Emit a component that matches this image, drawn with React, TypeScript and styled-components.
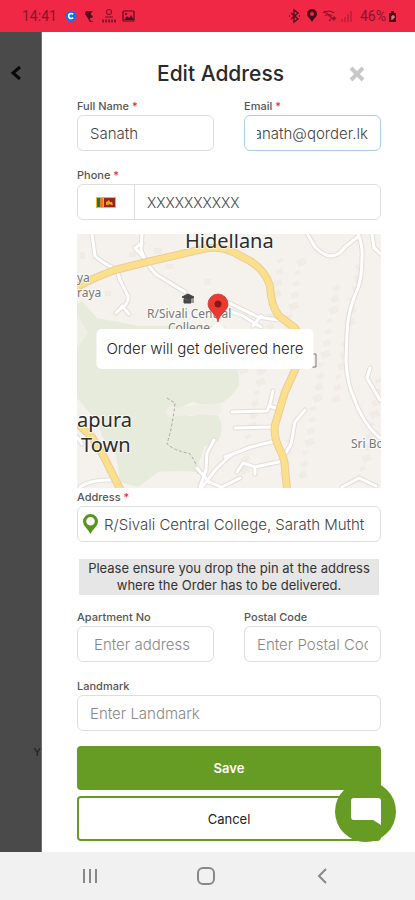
import React, { useLayoutEffect, useRef } from "react";
import styled, { createGlobalStyle, css } from "styled-components";

const GREEN = "#669c24";

const GlobalStyle = createGlobalStyle`
  *, *::before, *::after { box-sizing: border-box; }
  body { margin: 0; background: #fff; font-family: Inter, "Liberation Sans", sans-serif; color: #333; }
  button, input { font-family: inherit; }
`;

const Page = styled.div`
  display: flex;
  flex-direction: column;
  min-height: 100vh;
`;

const StatusBar = styled.header`
  display: flex;
  align-items: center;
  justify-content: space-between;
  height: 32px;
  padding: 0 18px 0 22px;
  background: #f02846;
  color: #86152a;
  font: 400 14px/20px Roboto, sans-serif;
`;

const StatusGroup = styled.div<{ $gap: number }>`
  display: flex;
  align-items: center;
  gap: ${(p) => p.$gap}px;
  svg { display: block; }
`;

const Body = styled.div`
  display: flex;
  flex: 1;
`;

const Backdrop = styled.aside`
  display: flex;
  flex-direction: column;
  justify-content: space-between;
  width: 42px;
  flex: none;
  padding: 30px 0 91px 6px;
  background: #4a4a4a;
  border-right: 1px solid #6e6e6e;
  overflow: hidden;
`;

const IconButton = styled.button`
  display: flex;
  align-items: center;
  justify-content: center;
  width: 20px;
  height: 22px;
  padding: 0;
  border: 0;
  background: none;
`;

const HiddenText = styled.span`
  align-self: flex-end;
  font-size: 11px;
  line-height: 18px;
  color: #1c1c1c;
`;

const Drawer = styled.main`
  position: relative;
  flex: 1;
  min-width: 0;
  padding: 27px 34px 11px 35px;
  background: #fff;
`;

const TitleRow = styled.div`
  display: grid;
  grid-template-columns: 24px 1fr 34px;
  align-items: center;
  justify-items: center;
  padding: 0 7px 0 0;
  margin-bottom: 10px;
`;

const Title = styled.h1`
  grid-column: 2;
  margin: 0;
  font-size: 21px;
  font-weight: 500;
  line-height: 30px;
  color: #2a2a2a;
  white-space: nowrap;
`;

const Form = styled.form`
  display: flex;
  flex-direction: column;
`;

const Row = styled.div`
  display: grid;
  grid-template-columns: 1fr 1fr;
  gap: 30px;
  margin-bottom: 17px;
`;

const Field = styled.div<{ $after?: number }>`
  display: flex;
  flex-direction: column;
  gap: 2px;
  min-width: 0;
  margin-bottom: ${(p) => p.$after ?? 0}px;
`;

const Label = styled.label`
  font-size: 11px;
  font-weight: 500;
  line-height: 14px;
  color: #555;
`;

const Required = styled.span`
  color: #ee1c2e;
`;

const box = css`
  height: 36px;
  border: 1px solid #dcdfe0;
  border-radius: 6px;
  background: #fff;
`;

const textStyle = css`
  font-weight: 300;
  color: #444;
  outline: none;
  &::placeholder { color: #888; opacity: 1; }
`;

const Input = styled.input<{ $active?: boolean; $indent?: number }>`
  ${box}
  ${textStyle}
  width: 100%;
  padding: 0 12px 0 ${(p) => p.$indent ?? 12}px;
  border-color: ${(p) => (p.$active ? "#a9cfe8" : "#dcdfe0")};
  font-size: 15px;
`;

const Group = styled.div`
  ${box}
  display: flex;
  align-items: stretch;
  overflow: hidden;
`;

const GroupInput = styled.input<{ $indent: number; $size: number }>`
  ${textStyle}
  flex: 1;
  min-width: 0;
  margin-right: 12px;
  padding: 0 0 0 ${(p) => p.$indent}px;
  border: 0;
  background: none;
  font-size: ${(p) => p.$size}px;
`;

const FlagButton = styled.button`
  display: flex;
  align-items: center;
  justify-content: center;
  width: 57px;
  padding: 0;
  border: 0;
  border-right: 1px solid #dcdfe0;
  background: none;
`;

const PinSlot = styled.span`
  display: flex;
  align-items: center;
  padding-left: 5px;
`;

const MapBox = styled.div`
  position: relative;
  height: 254px;
  margin: -3px 0 2px;
  overflow: hidden;
  background: #f4f1eb;
`;

const MapDrawing = styled.svg`
  display: block;
  width: 100%;
  height: 100%;
`;

const Popup = styled.div`
  position: absolute;
  top: 95px;
  left: 50%;
  transform: translateX(-50%);
  margin-left: -24px;
  width: 217px;
  border-radius: 5px;
  background: #fff;
  font-size: 15px;
  font-weight: 300;
  line-height: 40px;
  text-align: center;
  color: #222;
  white-space: nowrap;
`;

const Note = styled.p`
  margin: 0 2px 15px;
  padding: 1px 6px;
  background: #e6e6e6;
  font-size: 13px;
  line-height: 17px;
  text-align: center;
  color: #333;
`;

const Action = styled.button<{ $solid?: boolean }>`
  height: ${(p) => (p.$solid ? 44 : 45)}px;
  margin-bottom: ${(p) => (p.$solid ? 6 : 0)}px;
  border: 2px solid ${GREEN};
  border-radius: 4px;
  background: ${(p) => (p.$solid ? GREEN : "#fff")};
  color: ${(p) => (p.$solid ? "#fff" : "#222")};
  font-size: 13px;
  font-weight: ${(p) => (p.$solid ? 600 : 400)};
`;

const ChatButton = styled.button`
  position: absolute;
  right: 19px;
  bottom: 10px;
  display: flex;
  align-items: center;
  justify-content: center;
  width: 61px;
  height: 61px;
  padding: 0;
  border: 0;
  border-radius: 50%;
  background: ${GREEN};
`;

const SystemNav = styled.nav`
  display: flex;
  align-items: center;
  justify-content: center;
  gap: 96px;
  height: 48px;
  padding-right: 4px;
  background: #f1f1f1;
`;

const Star = () => <Required>*</Required>;

const roads = [
  "M15 0 18 22Q24 28 40 36L43 46 51 62Q52 70 44 74L39 79M45 72 52 80",
  "M65 0 64 16Q70 32 80 41L108 58M58 14 70 27M58 14 65 9",
  "M231 1 238 13Q248 23 256 22 262 21 269 12L282 2",
  "M281 0Q286 12 285 24 285 42 281 54 270 78 270 100L269 126Q270 150 277 164 286 190 303 204",
  "M295 0 297 14 304 20",
  "M150 68 181 83 201 86M150 76 166 82 184 93M176 92 184 82",
  "M155 178 190 177 193 170 196 157M192 172 202 175",
  "M158 194 197 193",
  "M148 223 174 213 198 207",
  "M228 176 218 188 214 210 206 224",
  "M206 227 178 233 178 240M178 233 166 229 160 238M145 253 163 244",
  "M293 134 290 144 303 166",
  "M265 253 282 244 299 252",
  "M137 206 130 219 129 236 123 253M154 221 140 234 125 253M120 234 132 248 144 253",
  "M3 253Q14 245 36 246M0 203 5 210",
];
const highways = [
  "M0 53Q18 43 38 36L70 28 126 15Q143 11 158 19L173 27Q188 36 193 52 194 72 202 82L218 94Q230 110 218 136L208 158 198 191Q196 202 203 216 208 225 208 235L210 255",
  "M4 193 15 203 27 223 43 255",
];

const blocks = Array.from({ length: 74 }, (_, i) => ({
  x: 160 + ((i * 47) % 139),
  y: 22 + ((i * 71) % 224),
  s: 4 + (i % 4),
}));

const DeliveryMap = () => (
  <MapDrawing viewBox="0 0 304 254" preserveAspectRatio="xMidYMid slice" role="img" aria-label="Delivery map">
    <rect width="304" height="254" fill="#f5f2ed" />
    <g fill="#f0ebe5">
      {blocks.map((b, i) => (
        <rect key={i} x={b.x} y={b.y} width={b.s + 2} height={b.s} transform={`rotate(-25 ${b.x} ${b.y})`} />
      ))}
      <path d="M52 18h7v5h-7zM77 14h8v6h-8zM88 30h8v5h-8zM3 18h5v7h-5zM28 57h6v5h-6zM127 45h7v6h-7z" />
    </g>
    <path d="M0 70 5 67 20 84 62 92H148Q164 140 162 152 152 166 141 171 130 172 116 168 105 170 106 178 112 185 122 180L141 181Q148 194 141 207L127 213 119 238Q100 236 81 238L61 253 43 248 38 215 25 203 22 190 0 164Z" fill="#e6ebdc" />
    <circle cx="95" cy="178" r="6" fill="#f0efe6" />
    <path d="M95 175 118 171 144 169V180L118 181 95 182Z" fill="#f0efe6" />
    <path d="M0 80 11 99 0 115Z" fill="#f0efe6" />
    <path d="M90 164 98 169Q96 190 90 210 100 218 112 219 120 228 121 240" fill="none" stroke="#aaa99f" strokeWidth="1" strokeDasharray="3 2" />
    <g fill="none" strokeLinejoin="round" strokeLinecap="round">
      {roads.map((d) => <path key={d} d={d} stroke="#e0deda" strokeWidth="5" />)}
      {roads.map((d) => <path key={d} d={d} stroke="#fff" strokeWidth="3" />)}
      {highways.map((d) => <path key={d} d={d} stroke="#efc999" strokeWidth="8" />)}
      {highways.map((d) => <path key={d} d={d} stroke="#fbe08c" strokeWidth="6" />)}
    </g>
    <g fontFamily='"Noto Sans", sans-serif' fill="#2c2c2c" stroke="#fff" strokeWidth="2" paintOrder="stroke" strokeOpacity="0.7">
      <text x="108" y="14" fontSize="20">Hidellana</text>
      <text x="0" y="193" fontSize="20">apura</text>
      <text x="4" y="218" fontSize="20">Town</text>
      <g fontSize="12" fill="#777">
        <text x="0" y="48">ya</text>
        <text x="0" y="63">raya</text>
        <text x="274" y="214">Sri Bo</text>
        <text x="70" y="84">R/Sivali Central</text>
        <text x="91" y="98">College</text>
      </g>
    </g>
    <path d="m105 63 6-3 6 3-6 3zM107 65v4h7v-4l-3 2zM116 63v6" fill="#444" stroke="#444" />
    <path d="M235 120h4v13h-4" fill="none" stroke="#777" />
    <path d="M141 88c-1-8-10-11-10-18a10 10 0 0 1 20 0c0 7-9 10-10 18z" fill="#e93b32" stroke="#c83029" strokeWidth="0.7" />
    <circle cx="141" cy="70" r="3.5" fill="#8c1713" />
    <path d="M132 96 141 88 150 96z" fill="#fff" opacity=".8" />
  </MapDrawing>
);

const Flag = () => (
  <svg width="20" height="11" viewBox="0 0 20 11" aria-label="Sri Lanka">
    <rect width="20" height="11" fill="#f2b51d" />
    <rect x="1" y="1" width="3" height="9" fill="#147a50" />
    <rect x="4" y="1" width="3" height="9" fill="#ef7a1c" />
    <rect x="8" y="1" width="11" height="9" fill="#97261c" />
    <path d="M10 8V5l2-1 1-1 1 2h2l1 3h-2l-1-1-2 1z" fill="#eca122" />
  </svg>
);

const StatusIcons = () => (
  <svg width="71" height="16" viewBox="0 0 71 16" aria-hidden="true">
    <circle cx="7" cy="8" r="5.5" fill="#1671e8" />
    <path d="M9 6.3a2.5 2.5 0 1 0 0 3.4" fill="none" stroke="#fff" strokeWidth="1.7" />
    <path d="M22 3h7l-2 2v2l2 1-1 2h-2v2l3 2h-3l-3-5-2-3z" fill="#55101f" />
    <g fill="none" stroke="#86152a" strokeWidth="1.2">
      <circle cx="45" cy="4" r="2.5" />
      <path d="M41 9h8" />
      <path d="M38 13h14" strokeWidth="3" strokeDasharray="2 1" />
      <rect x="59" y="3" width="11" height="10" rx="1" stroke="#55101f" />
    </g>
    <path d="m60 12 3-4 2 2 2-3 3 5z" fill="#55101f" />
    <circle cx="62" cy="6" r="1" fill="#55101f" />
  </svg>
);

const SignalIcons = () => (
  <svg width="70" height="16" viewBox="0 0 70 16" aria-hidden="true" fill="none" stroke="#55101f">
    <path d="m3 5 7 6-4 3V2l4 3-7 6M1 8h1M11 8h1" strokeWidth="1.4" />
    <path fillRule="evenodd" d="M24 14c-2-4-5-5-5-8a5 5 0 0 1 10 0c0 3-3 4-5 8zm0-10a2 2 0 1 0 0 4 2 2 0 0 0 0-4z" fill="#4c0c1a" stroke="none" />
    <path d="M35 5q6-4 11 0M37 8q4-3 7 0M36 3l10 9M41 13l2-2M46 9v4m-1-3 1-1 2 2" stroke="#86152a" strokeWidth="1.1" />
    <path d="M54 14v-3M57 14V9M60 14V6M63 14V3" stroke="#b82139" strokeWidth="1.5" />
  </svg>
);

const Battery = () => (
  <svg width="9" height="13" viewBox="0 0 9 13" aria-hidden="true">
    <path d="M3 1h3v2h2v9H1V3h2z" fill="#4c0c1a" />
    <path d="M4 10V6h2v2H4" fill="none" stroke="#f6a6b4" />
  </svg>
);

export default function App() {
  const email = useRef<HTMLInputElement>(null);
  useLayoutEffect(() => {
    if (email.current) email.current.scrollLeft = email.current.scrollWidth;
  }, []);

  return (
    <Page>
      <GlobalStyle />
      <StatusBar>
        <StatusGroup $gap={7}>
          <span>14:41</span>
          <StatusIcons />
        </StatusGroup>
        <StatusGroup $gap={2}>
          <SignalIcons />
          <span>46%</span>
          <Battery />
        </StatusGroup>
      </StatusBar>
      <Body>
        <Backdrop>
          <IconButton aria-label="Back">
            <svg width="12" height="16" viewBox="0 0 12 16"><path d="m10 2-7 6 7 6" fill="none" stroke="#080808" strokeWidth="3" /></svg>
          </IconButton>
          <HiddenText>Y</HiddenText>
        </Backdrop>
        <Drawer>
          <TitleRow>
            <Title>Edit Address</Title>
            <IconButton aria-label="Close">
              <svg width="16" height="16" viewBox="0 0 16 16"><path d="m2 2 12 12M14 2 2 14" stroke="#c8c8c8" strokeWidth="4" /></svg>
            </IconButton>
          </TitleRow>
          <Form onSubmit={(e) => e.preventDefault()}>
            <Row>
              <Field>
                <Label htmlFor="name">Full Name <Star /></Label>
                <Input id="name" defaultValue="Sanath" />
              </Field>
              <Field>
                <Label htmlFor="email">Email <Star /></Label>
                <Input id="email" ref={email} $active defaultValue="sanath@qorder.lk" />
              </Field>
            </Row>
            <Field $after={17}>
              <Label htmlFor="phone">Phone <Star /></Label>
              <Group>
                <FlagButton type="button" aria-label="Country"><Flag /></FlagButton>
                <GroupInput id="phone" $indent={12} $size={14} defaultValue="XXXXXXXXXX" />
              </Group>
            </Field>
            <MapBox>
              <DeliveryMap />
              <Popup>Order will get delivered here</Popup>
            </MapBox>
            <Field $after={17}>
              <Label htmlFor="address">Address <Star /></Label>
              <Group>
                <PinSlot>
                  <svg width="15" height="20" viewBox="0 0 15 20" aria-hidden="true">
                    <path fillRule="evenodd" d="M7.500 20C5 15 0 12 0 7.500a7.500 7.500 0 0 1 15 0C15 12 10 15 7.500 20zm0-17a4.300 4.300 0 1 0 0 8.600 4.300 4.300 0 0 0 0-8.600z" fill="#59951a" />
                  </svg>
                </PinSlot>
                <GroupInput id="address" $indent={6} $size={15} defaultValue="R/Sivali Central College, Sarath Mutht" />
              </Group>
            </Field>
            <Note>Please ensure you drop the pin at the address where the Order has to be delivered.</Note>
            <Row>
              <Field>
                <Label htmlFor="apartment">Apartment No</Label>
                <Input id="apartment" $indent={16} placeholder="Enter address" />
              </Field>
              <Field>
                <Label htmlFor="postal">Postal Code</Label>
                <Input id="postal" placeholder="Enter Postal Code" />
              </Field>
            </Row>
            <Field $after={15}>
              <Label htmlFor="landmark">Landmark</Label>
              <Input id="landmark" placeholder="Enter Landmark" />
            </Field>
            <Action $solid type="submit">Save</Action>
            <Action type="button">Cancel</Action>
          </Form>
          <ChatButton aria-label="Chat">
            <svg width="30" height="27" viewBox="0 0 30 27"><path d="M3 0h24q3 0 3 3v24l-8-5H3q-3 0-3-3V3q0-3 3-3z" fill="#fff" /></svg>
          </ChatButton>
        </Drawer>
      </Body>
      <SystemNav aria-label="System navigation">
        <IconButton aria-label="Recent apps">
          <svg width="16" height="16" viewBox="0 0 16 16"><path d="M2 1v14M8 1v14M14 1v14" stroke="#888" strokeWidth="2" /></svg>
        </IconButton>
        <IconButton aria-label="Home">
          <svg width="18" height="18" viewBox="0 0 18 18"><rect x="1" y="1" width="16" height="16" rx="5" fill="none" stroke="#888" strokeWidth="2" /></svg>
        </IconButton>
        <IconButton aria-label="Back">
          <svg width="10" height="16" viewBox="0 0 10 16"><path d="M9 1 2 8l7 7" fill="none" stroke="#888" strokeWidth="2" /></svg>
        </IconButton>
      </SystemNav>
    </Page>
  );
}
